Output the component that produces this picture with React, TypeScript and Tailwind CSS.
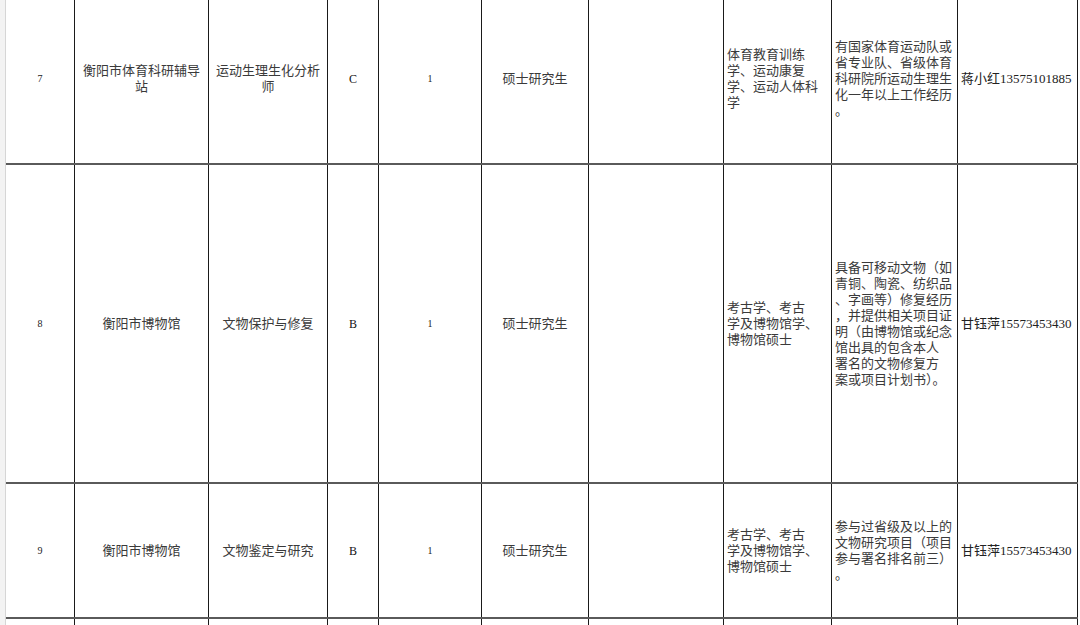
type Row = {
  no: string;
  unit: string[];
  post: string[];
  grade: string;
  count: string;
  degree: string;
  major: string[];
  req: string[];
  contact: string;
  h: string;
};

const rows: Row[] = [
  {
    no: "7",
    unit: ["衡阳市体育科研辅导", "站"],
    post: ["运动生理生化分析", "师"],
    grade: "C",
    count: "1",
    degree: "硕士研究生",
    major: ["体育教育训练", "学、运动康复", "学、运动人体科", "学"],
    req: ["有国家体育运动队或", "省专业队、省级体育", "科研院所运动生理生", "化一年以上工作经历", "。"],
    contact: "蒋小红13575101885",
    h: "h-[170px] -mt-[5px]",
  },
  {
    no: "8",
    unit: ["衡阳市博物馆"],
    post: ["文物保护与修复"],
    grade: "B",
    count: "1",
    degree: "硕士研究生",
    major: ["考古学、考古", "学及博物馆学、", "博物馆硕士"],
    req: [
      "具备可移动文物（如",
      "青铜、陶瓷、纺织品",
      "、字画等）修复经历",
      "，并提供相关项目证",
      "明（由博物馆或纪念",
      "馆出具的包含本人",
      "署名的文物修复方",
      "案或项目计划书）。",
    ],
    contact: "甘钰萍15573453430",
    h: "h-[319px]",
  },
  {
    no: "9",
    unit: ["衡阳市博物馆"],
    post: ["文物鉴定与研究"],
    grade: "B",
    count: "1",
    degree: "硕士研究生",
    major: ["考古学、考古", "学及博物馆学、", "博物馆硕士"],
    req: ["参与过省级及以上的", "文物研究项目（项目", "参与署名排名前三）", "。"],
    contact: "甘钰萍15573453430",
    h: "h-[135px]",
  },
];

const grid =
  "grid shrink-0 grid-cols-[69px_134px_119px_51px_103px_107px_135px_108px_126px_120px]";

function Lines({ lines }: { lines: string[] }) {
  return (
    <div>
      {lines.map((l, i) => (
        <div key={i} className="whitespace-nowrap">
          {l}
        </div>
      ))}
    </div>
  );
}

function Cell({
  children,
  className = "",
}: {
  children?: React.ReactNode;
  className?: string;
}) {
  return (
    <div className={`flex items-center border-r border-[#1a1a1a] ${className}`}>
      {children}
    </div>
  );
}

export default function App() {
  return (
    <div
      className="flex h-[625px] w-[1080px] overflow-hidden bg-white text-[13px] leading-[16px] text-[#3a3a3a]"
      style={{ fontFamily: '"Liberation Serif", "Noto Sans CJK SC", serif' }}
    >
      <div className="w-[6px] shrink-0 border-r border-[#d6d6d6] bg-[#f3f3f3]" />
      <div className="flex flex-col">
        {rows.map((r) => (
          <div key={r.no} className={`${grid} ${r.h} border-b-2 border-[#5a5a5a]`}>
            <Cell className="justify-center text-[10px] text-[#222]">{r.no}</Cell>
            <Cell className="justify-center text-center">
              <Lines lines={r.unit} />
            </Cell>
            <Cell className="justify-center text-center">
              <Lines lines={r.post} />
            </Cell>
            <Cell className="justify-center text-[12px] text-[#111]">{r.grade}</Cell>
            <Cell className="justify-center text-[10px] text-[#222]">{r.count}</Cell>
            <Cell className="justify-center">{r.degree}</Cell>
            <Cell />
            <Cell className="pl-[3px]">
              <Lines lines={r.major} />
            </Cell>
            <Cell className="pl-[3px]">
              <Lines lines={r.req} />
            </Cell>
            <Cell className="pl-[3px] text-[#222]">{r.contact}</Cell>
          </div>
        ))}
        <div className={`${grid} h-[20px]`}>
          {Array.from({ length: 10 }).map((_, i) => (
            <Cell key={i} />
          ))}
        </div>
      </div>
    </div>
  );
}
